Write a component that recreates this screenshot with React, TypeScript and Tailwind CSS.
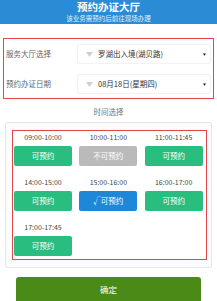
import React from "react";

const font = { fontFamily: '"Noto Sans CJK SC", "Noto Sans", sans-serif' };

function Slot({ time, state }: { time: string; state: "ok" | "no" | "sel" }) {
  const cls =
    state === "ok"
      ? "bg-[#29be80]"
      : state === "no"
      ? "bg-[#bababa]"
      : "bg-[#1d87d9]";
  const label = state === "ok" ? "可预约" : state === "no" ? "不可预约" : "√可预约";
  return (
    <div className="flex w-[58px] flex-col items-center">
      <div className="h-[10px] text-[7px] leading-[10px] text-[#444]">{time}</div>
      <div
        className={`mt-[4px] flex h-[20px] w-[58px] items-center justify-center rounded-[2px] text-[7.5px] text-white ${cls}`}
      >
        {label}
      </div>
    </div>
  );
}

function SelectRow({ label, value }: { label: string; value: string }) {
  return (
    <div className="flex h-[30px] items-center">
      <div className="w-[73px] pl-[2px] text-[7.5px] text-[#666]">{label}</div>
      <div className="flex h-[20px] flex-1 items-center rounded-[2px] border border-[#f2f2f2] bg-white pl-[8px] pr-[4px]">
        <svg width="7" height="5" viewBox="0 0 7 5" className="shrink-0">
          <polygon points="0,0 7,0 3.5,5" fill="#cfcfcf" />
        </svg>
        <span className="ml-[5px] flex-1 text-[7.5px] text-[#333]">{value}</span>
        <svg width="3" height="3" viewBox="0 0 4 3" className="shrink-0">
          <polygon points="0,0 4,0 2,3" fill="#111" />
        </svg>
      </div>
    </div>
  );
}

export default function App() {
  return (
    <div className="h-[301px] w-[217px] overflow-hidden bg-white antialiased" style={font}>
      <div className="flex h-[24px] flex-col items-center bg-[#2b8cd5]">
        <div className="h-[14px] text-[10.5px] font-bold leading-[14px] text-white">预约办证大厅</div>
        <div className="h-[9px] text-[6.5px] leading-[9px] text-[#e6f1fb]">该业务需预约后前往现场办理</div>
      </div>

      <div className="mx-[3px] mt-[14px] h-[61px] border border-[#e0464b] pr-[2px]">
        <SelectRow label="服务大厅选择" value="罗湖出入境(湖贝路)" />
        <SelectRow label="预约办证日期" value="08月18日(星期四)" />
      </div>

      <div className="mt-[8px] text-center text-[7.5px] leading-[10px] text-[#777]">时间选择</div>

      <div className="mx-[5px] mt-[5px] h-[146px] rounded-[2px] border border-[#e6e6e6] bg-[#fcfcfc] pl-[6px] pr-[4px] pt-[7px]">
        <div className="h-[130px] border border-[#e0464b] bg-white pl-[1px] pr-[3px] pt-[1px]">
          <div className="grid grid-cols-3 gap-x-[7px] gap-y-[11px]">
            <Slot time="09:00-10:00" state="ok" />
            <Slot time="10:00-11:00" state="no" />
            <Slot time="11:00-11:45" state="ok" />
            <Slot time="14:00-15:00" state="ok" />
            <Slot time="15:00-16:00" state="sel" />
            <Slot time="16:00-17:00" state="ok" />
            <Slot time="17:00-17:45" state="ok" />
          </div>
        </div>
      </div>

      <div className="mx-[16px] mt-[9px] flex h-[26px] items-start justify-center rounded-t-[3px] bg-[#4a8b17] pt-[6px] text-[8.5px] text-white">
        确定
      </div>
    </div>
  );
}
